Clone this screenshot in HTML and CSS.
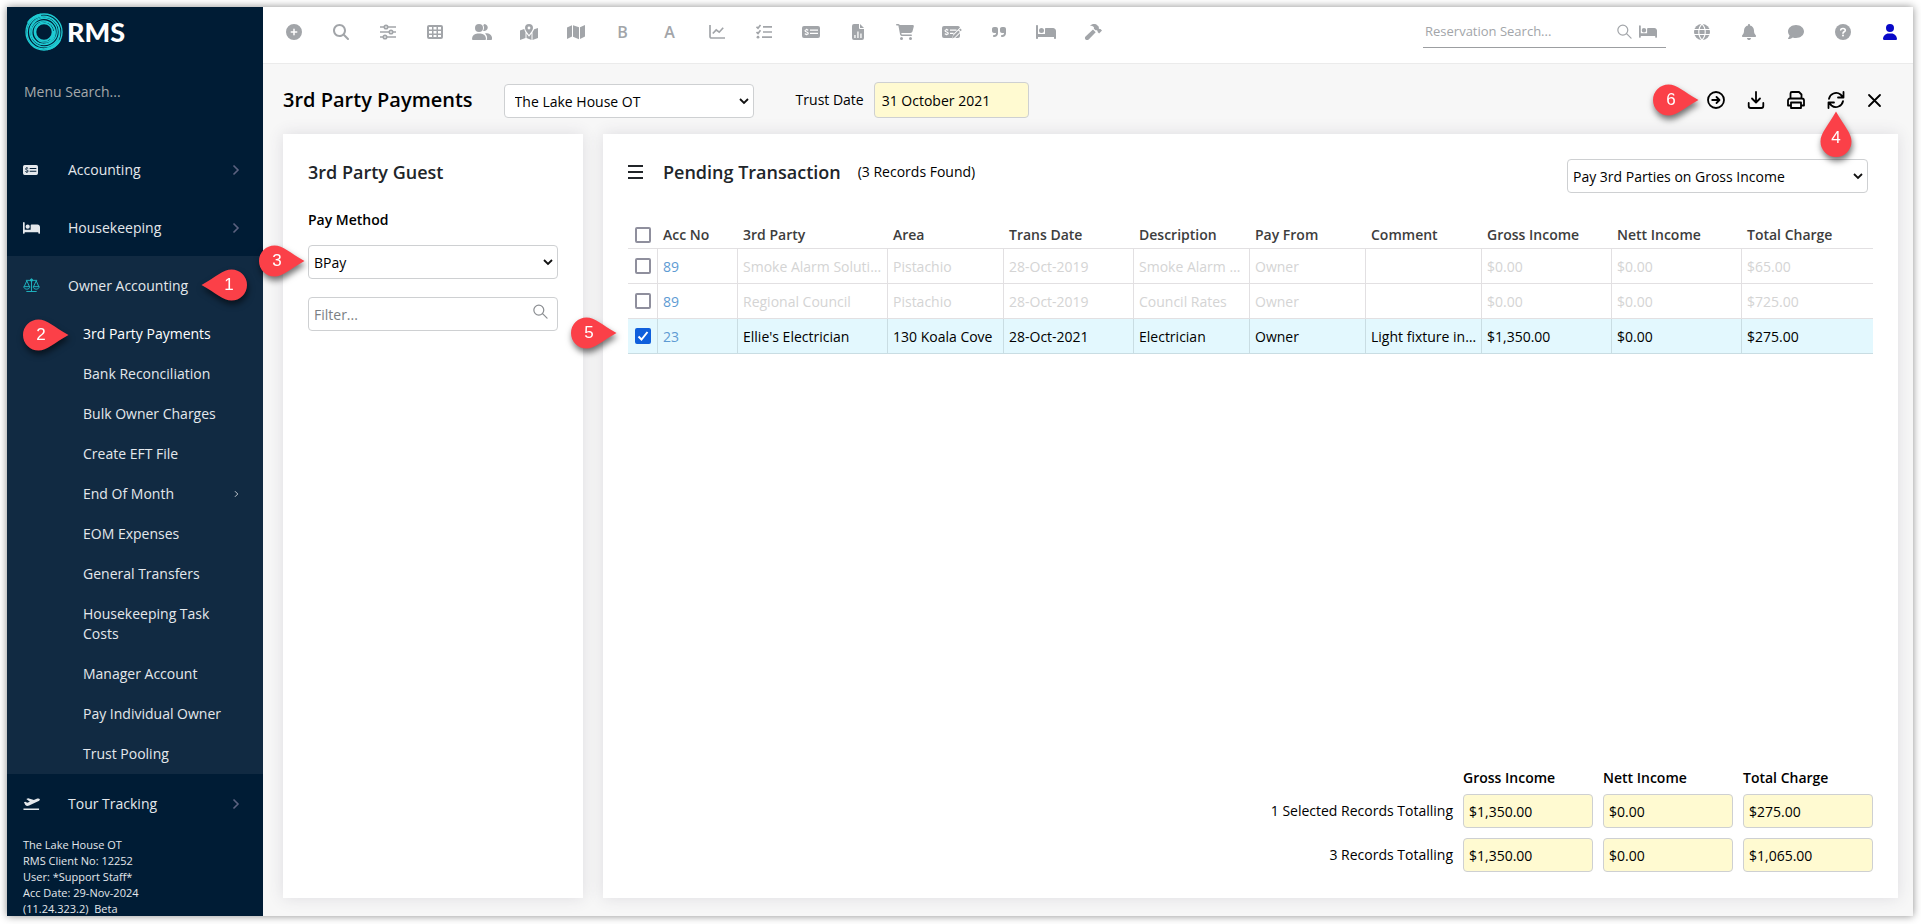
FILE: index.html
```html
<!DOCTYPE html>
<html lang="en">
<head>
<meta charset="UTF-8">
<meta name="viewport" content="width=device-width, initial-scale=1">
<title>3rd Party Payments</title>
<link rel="stylesheet" href="styles.css">
</head>
<body>

<!-- icons that are used more than once -->
<svg class="sprite" aria-hidden="true">
  <symbol id="i-bed" viewBox="0 0 640 512"><path d="M32 32c17.700 0 32 14.300 32 32V320H288V160c0-17.700 14.300-32 32-32H544c53 0 96 43 96 96V448c0 17.700-14.300 32-32 32s-32-14.300-32-32V416H352 320 64v32c0 17.700-14.300 32-32 32s-32-14.300-32-32V64C0 46.300 14.300 32 32 32zm144 96a80 80 0 1 1 0 160 80 80 0 1 1 0-160z"/></symbol>
  <symbol id="i-money" viewBox="0 0 18 14"><path fill-rule="evenodd" d="M2 1h14a2 2 0 0 1 2 2v8a2 2 0 0 1-2 2H2a2 2 0 0 1-2-2V3a2 2 0 0 1 2-2zM8 4.500v1.200h8V4.500zM8 7.800V9h8V7.800z"/><path class="cut" d="M6.200 5.300C5.500 4.400 3 4.400 3 5.800c0 1.500 3.300.9 3.300 2.500 0 1.400-2.700 1.300-3.500.4M4.600 3.700v1M4.600 9.200v1.100"/></symbol>
  <symbol id="i-find" viewBox="0 0 16 16"><path fill="none" stroke="currentColor" stroke-width="1.300" stroke-linecap="round" d="M11.500 6.500a5.300 5.300 0 1 1-10.600 0 5.300 5.300 0 0 1 10.600 0zM10.200 10.200l4.800 4.800"/></symbol>
  <symbol id="i-next" viewBox="0 0 8 12"><path fill="none" stroke="currentColor" stroke-width="1.600" d="M1.500 1.500L6 6l-4.500 4.500"/></symbol>
  <symbol id="i-pin" viewBox="0 0 46 32"><path d="M15.500 .5C24 .5 31 8 45.500 16 31 24 24 31.500 15.500 31.500a15.500 15.500 0 0 1 0-31z"/></symbol>
  <symbol id="i-pin-up" viewBox="0 0 32 46"><path d="M.5 30.500C.5 22 8 15 16 .5 24 15 31.500 22 31.500 30.500a15.500 15.500 0 0 1-31 0z"/></symbol>
</svg>

<div class="app">

  <aside class="sidebar">
    <div class="brand">
      <svg class="brand-mark" viewBox="0 0 38 38" aria-hidden="true">
        <g fill="none" stroke="#1fcbd3" stroke-width="1.300">
          <circle cx="19" cy="19" r="18"/>
          <circle cx="18.500" cy="19.500" r="16.300"/>
          <circle cx="19.500" cy="19" r="14.800"/>
          <circle cx="19" cy="18.500" r="13.200"/>
          <circle cx="18.500" cy="19.500" r="11.700"/>
          <circle cx="19.500" cy="19" r="10.200"/>
          <circle cx="19" cy="19" r="8.600" stroke-width="1.800"/>
          <path stroke-width="2.400" d="M3 10A18 18 0 0 1 16 2M35 27a18 18 0 0 1-13 9M29 18a9 9 0 0 1-4 8"/>
        </g>
      </svg>
      <span class="brand-name">RMS</span>
    </div>
    <input class="menu-search" type="text" placeholder="Menu Search..." aria-label="Menu Search">

    <nav class="menu">
      <a class="menu-item" href="#"><svg class="menu-icon money"><use href="#i-money"/></svg><span>Accounting</span><svg class="next"><use href="#i-next"/></svg></a>
      <a class="menu-item" href="#"><svg class="menu-icon"><use href="#i-bed"/></svg><span>Housekeeping</span><svg class="next"><use href="#i-next"/></svg></a>

      <div class="menu-open">
        <a class="menu-item" href="#">
          <svg class="menu-icon scales" viewBox="0 0 18 16"><path d="M3 2.500h12M9 .8v13.400M3.500 14.400h11M4 3L1.200 9.200M4 3l2.800 6.200M14 3l-2.800 6.200M14 3l2.800 6.200M.8 9.200h6.400c0 3.600-6.400 3.600-6.400 0zM10.800 9.200h6.400c0 3.600-6.400 3.600-6.400 0z"/><circle cx="9" cy="2.300" r="1.300"/></svg>
          <span>Owner Accounting</span>
          <span class="pin pin-left pin-1"><svg><use href="#i-pin"/></svg><b>1</b></span>
        </a>
        <ul class="submenu">
          <li class="current"><a href="#">3rd Party Payments</a><span class="pin pin-2"><svg><use href="#i-pin"/></svg><b>2</b></span></li>
          <li><a href="#">Bank Reconciliation</a></li>
          <li><a href="#">Bulk Owner Charges</a></li>
          <li><a href="#">Create EFT File</a></li>
          <li><a href="#">End Of Month</a><svg class="next small"><use href="#i-next"/></svg></li>
          <li><a href="#">EOM Expenses</a></li>
          <li><a href="#">General Transfers</a></li>
          <li><a href="#">Housekeeping Task Costs</a></li>
          <li><a href="#">Manager Account</a></li>
          <li><a href="#">Pay Individual Owner</a></li>
          <li><a href="#">Trust Pooling</a></li>
        </ul>
      </div>

      <a class="menu-item" href="#">
        <svg class="menu-icon" viewBox="0 0 18 14"><path d="M.5 11.700h16.500v1.600H.5zM1 5.200l1.500-.6 2 1.200 2.800-1.300L3.500 1.700l2-.9 6 2 3-1.300c1.400-.6 3-.4 3.300.4.300.9-.6 1.700-1.800 2.300L6.500 8.600c-1.500.7-3 .5-4-.5z"/></svg>
        <span>Tour Tracking</span><svg class="next"><use href="#i-next"/></svg>
      </a>
    </nav>

    <p class="client">The Lake House OT<br>RMS Client No: 12252<br>User: *Support Staff*<br>Acc Date: 29-Nov-2024<br>(11.24.323.2)&nbsp; Beta</p>
  </aside>

  <div class="content">
    <header class="topbar">
      <div class="tools">
        <button type="button" aria-label="Add"><svg viewBox="0 0 512 512"><path d="M256 512A256 256 0 1 0 256 0a256 256 0 1 0 0 512zM232 344V280H168c-13.300 0-24-10.700-24-24s10.700-24 24-24h64V168c0-13.300 10.700-24 24-24s24 10.700 24 24v64h64c13.300 0 24 10.700 24 24s-10.700 24-24 24H280v64c0 13.300-10.700 24-24 24s-24-10.700-24-24z"/></svg></button>
        <button type="button" aria-label="Search"><svg viewBox="0 0 512 512"><path d="M416 208c0 45.900-14.900 88.300-40 122.700L502.600 457.400c12.500 12.500 12.500 32.800 0 45.300s-32.800 12.500-45.300 0L330.700 376c-34.400 25.200-76.800 40-122.700 40C93.100 416 0 322.900 0 208S93.100 0 208 0S416 93.100 416 208zM208 352a144 144 0 1 0 0-288 144 144 0 1 0 0 288z"/></svg></button>
        <button type="button" aria-label="Settings"><svg viewBox="0 0 16 16"><g class="line"><path d="M0 3h4M8 3h8M0 8h9M13 8h3M0 13h3M7 13h9"/><circle cx="6" cy="3" r="1.700"/><circle cx="11" cy="8" r="1.700"/><circle cx="5" cy="13" r="1.700"/></g></svg></button>
        <button type="button" aria-label="Grid"><svg viewBox="0 0 16 16"><path fill-rule="evenodd" d="M2 1h12a2 2 0 0 1 2 2v10a2 2 0 0 1-2 2H2a2 2 0 0 1-2-2V3a2 2 0 0 1 2-2zM2 3v2.500h3V3zM6.500 3v2.500h3V3zM11 3v2.500h3V3zM2 7v2.500h3V7zM6.500 7v2.500h3V7zM11 7v2.500h3V7zM2 11v2h3v-2zM6.500 11v2h3v-2zM11 11v2h3v-2z"/></svg></button>
        <button type="button" aria-label="Guests"><svg class="wide" viewBox="0 0 20 16"><circle cx="7" cy="4" r="4"/><path d="M5.500 9.500h3A5.500 5.500 0 0 1 14 15a1 1 0 0 1-1 1H1a1 1 0 0 1-1-1 5.500 5.500 0 0 1 5.500-5.500zM12.500 0a3.500 3.500 0 1 1-1.400 6.800 5.500 5.500 0 0 0 .2-5.600A3.500 3.500 0 0 1 12.500 0zM14 9.300h1A5 5 0 0 1 20 15c0 .5-.4 1-1 1h-4.200C15.500 13 15 11 13 9.400z"/></svg></button>
        <button type="button" aria-label="Map locations"><svg class="mid" viewBox="0 0 18 16"><path fill-rule="evenodd" d="M9 0a4 4 0 0 1 4 4c0 2-2.500 5-4 7-1.500-2-4-5-4-7a4 4 0 0 1 4-4zM9 2.600a1.400 1.400 0 1 0 0 2.800 1.400 1.400 0 0 0 0-2.800z"/><path d="M0 6.500L4.200 5c.4 1.500 1 2.700 1.300 3.200V14L0 16zM6.500 9.500L9 12.800l2.500-3.300V16l-5-2zM12.500 8.200l1.700-3L18 4v10l-5.500 2z"/></svg></button>
        <button type="button" aria-label="Map"><svg class="mid" viewBox="0 0 18 16"><path d="M0 3.500L5 1.300v11.200L0 15zM6 1.200l6 2v12l-6-2.500zM13 3.300L18 1v11.500l-5 2.500z"/></svg></button>
        <button type="button" class="letter">B</button>
        <button type="button" class="letter">A</button>
        <button type="button" aria-label="Chart"><svg viewBox="0 0 16 16"><g class="line"><path d="M1 1v11.500A1.500 1.500 0 0 0 2.500 14H16M3.800 9.500l3.400-3.700 3 2.400 4-4.400"/></g></svg></button>
        <button type="button" aria-label="Checklist"><svg viewBox="0 0 16 16"><g class="line"><path d="M7 2.800h9M7 8h9M6 13.200h10M.5 2.800l1.500 1.400L4.500 1M.5 8L2 9.400 4.500 6.200"/></g><circle cx="2" cy="13.200" r="1.400"/></svg></button>
        <button type="button" aria-label="Accounts"><svg class="mid money"><use href="#i-money"/></svg></button>
        <button type="button" aria-label="Reports"><svg viewBox="0 0 16 16"><path fill-rule="evenodd" d="M4 0h5v4a1 1 0 0 0 1 1h4v9a2 2 0 0 1-2 2H4a2 2 0 0 1-2-2V2a2 2 0 0 1 2-2zM4.300 11v3h1.300v-3zM7.300 7.500V14h1.300V7.500zM10.300 9.500V14h1.300V9.500zM10 0l4 4h-4z"/></svg></button>
        <button type="button" aria-label="Sales"><svg class="mid" viewBox="0 0 576 512"><path d="M0 24C0 10.700 10.700 0 24 0H69.500c22 0 41.500 12.800 50.600 32h411c26.300 0 45.500 25 38.600 50.400l-41 152.300c-8.500 31.400-37 53.300-69.500 53.300H170.700l5.400 28.500c2.200 11.300 12.100 19.500 23.600 19.500H488c13.300 0 24 10.700 24 24s-10.700 24-24 24H199.700c-34.600 0-64.300-24.600-70.700-58.500L77.400 54.500c-.7-3.800-4-6.500-7.900-6.500H24C10.700 48 0 37.300 0 24zM128 464a48 48 0 1 1 96 0 48 48 0 1 1 -96 0zm336-48a48 48 0 1 1 0 96 48 48 0 1 1 0-96z"/></svg></button>
        <button type="button" aria-label="Edit charges"><svg class="wide money" viewBox="0 0 20 16"><path fill-rule="evenodd" d="M2 2h14a2 2 0 0 1 2 1.500L11.500 10 10 14H2a2 2 0 0 1-2-2V4a2 2 0 0 1 2-2zM8 5.500v1.200h6.500V5.500zM8 8.800V10h3.500V8.800z"/><path d="M18.300 4.500l1.500 1.500-1.200 1.200-1.500-1.500zM16.300 6.500L17.900 8l-5.400 5.500-2.300.9.700-2.400zM15 12.200l3-3V12a2 2 0 0 1-2 2h-2.800z"/><path class="cut" d="M6.200 6.300C5.500 5.400 3 5.400 3 6.800c0 1.500 3.300.9 3.300 2.500 0 1.400-2.700 1.300-3.500.4M4.600 4.700v1M4.600 10.200v1.100"/></svg></button>
        <button type="button" aria-label="Quotes"><svg class="slim" viewBox="0 0 448 512"><path d="M448 296c0 66.300-53.700 120-120 120h-8c-17.700 0-32-14.300-32-32s14.300-32 32-32h8c30.900 0 56-25.100 56-56v-8H320c-35.300 0-64-28.700-64-64V160c0-35.300 28.700-64 64-64h64c35.300 0 64 28.700 64 64v136zm-256 0c0 66.300-53.700 120-120 120H64c-17.700 0-32-14.300-32-32s14.300-32 32-32h8c30.900 0 56-25.100 56-56v-8H64c-35.300 0-64-28.700-64-64V160c0-35.300 28.700-64 64-64h64c35.300 0 64 28.700 64 64v136z"/></svg></button>
        <button type="button" aria-label="Housekeeping"><svg class="wide"><use href="#i-bed"/></svg></button>
        <button type="button" aria-label="Maintenance"><svg class="mid" viewBox="0 0 18 16"><path d="M6 1.800C8-.3 11.500-.5 13.500 1.400l1.300 1.400v1.600l.7.700h1l1.500 1.500-2.900 2.900-1.500-1.500v-1l-.8-.8h-1.300L9.900 4.700V3.200C9 2.300 7.500 1.800 6 1.800zM9 5.500l2.700 2.700-7 7.300c-1 .9-2.300.8-3.200 0-.8-.8-.8-2.200 0-3z"/></svg></button>
      </div>

      <div class="booking-search">
        <input type="text" placeholder="Reservation Search..." aria-label="Reservation Search">
        <svg class="find"><use href="#i-find"/></svg>
        <svg class="bed"><use href="#i-bed"/></svg>
      </div>

      <div class="tools">
        <button type="button" aria-label="Language"><svg viewBox="0 0 16 16"><circle cx="8" cy="8" r="8"/><path class="cut" d="M0 5.500h16M0 10.500h16M8 0C3.700 4 3.700 12 8 16M8 0c4.300 4 4.300 12 0 16"/></svg></button>
        <button type="button" aria-label="Alerts"><svg class="slim" viewBox="0 0 448 512"><path d="M224 0c-17.700 0-32 14.300-32 32V51.200C119 66 64 130.600 64 208v18.800c0 47-17.300 92.400-48.500 127.600l-7.400 8.300c-8.400 9.400-10.400 22.900-5.300 34.400S19.400 416 32 416H416c12.600 0 24-7.400 29.200-18.900s3.100-25-5.300-34.400l-7.400-8.300C401.300 319.200 384 273.900 384 226.800V208c0-77.400-55-142-128-156.800V32c0-17.700-14.300-32-32-32zm45.300 493.300c12-12 18.700-28.300 18.700-45.300H224 160c0 17 6.700 33.300 18.700 45.300s28.300 18.700 45.300 18.700s33.300-6.700 45.300-18.700z"/></svg></button>
        <button type="button" aria-label="Messages"><svg viewBox="0 0 512 512"><path d="M512 240c0 114.900-114.600 208-256 208c-37.100 0-72.300-6.400-104.100-17.900c-11.900 8.700-31.300 20.600-54.300 30.600C73.600 471.100 44.700 480 16 480c-6.500 0-12.300-3.900-14.800-9.900c-2.500-6-1.100-12.800 3.400-17.400C20 436 44 400 47.400 361C17.700 326.800 0 285.100 0 240C0 125.100 114.600 32 256 32s256 93.100 256 208z"/></svg></button>
        <button type="button" aria-label="Help"><svg viewBox="0 0 16 16"><circle cx="8" cy="8" r="8"/><path fill="none" stroke="#fff" stroke-width="1.600" stroke-linecap="round" d="M5.700 5.900C5.900 3.900 10.300 3.900 10.300 6.200c0 1.500-2.300 1.600-2.300 3"/><circle cx="8" cy="11.600" r="1" fill="#fff"/></svg></button>
        <button type="button" class="user" aria-label="User"><svg class="slim" viewBox="0 0 448 512"><path d="M224 256A128 128 0 1 0 224 0a128 128 0 1 0 0 256zm-45.700 48C79.800 304 0 383.800 0 482.300C0 498.700 13.300 512 29.700 512H418.300c16.400 0 29.700-13.300 29.700-29.700C448 383.800 368.200 304 269.700 304H178.300z"/></svg></button>
      </div>
    </header>

    <div class="page-head">
      <h1>3rd Party Payments</h1>
      <select class="field property" aria-label="Property"><option>The Lake House OT</option></select>
      <label for="trust-date">Trust Date</label>
      <input class="field yellow trust-date" id="trust-date" type="text" value="31 October 2021">

      <div class="actions">
        <button type="button" aria-label="Process">
          <svg viewBox="0 0 18 18"><circle cx="9" cy="9" r="8"/><path d="M5.200 9h7.200M9.500 6l3 3-3 3"/></svg>
          <span class="pin pin-6"><svg><use href="#i-pin"/></svg><b>6</b></span>
        </button>
        <button type="button" aria-label="Download"><svg viewBox="0 0 18 18"><path d="M9 1v10M5 7.500l4 4 4-4M1.700 12v3A2 2 0 0 0 3.700 17h10.600a2 2 0 0 0 2-2v-3"/></svg></button>
        <button type="button" aria-label="Print"><svg viewBox="0 0 18 18"><path d="M3.500 7V2.500A1.500 1.500 0 0 1 5 1h7l2.500 2.500V7M4 14.500H1V9.500A2 2 0 0 1 3 7.500h12a2 2 0 0 1 2 2v5h-3M4 11.500h10V17H4z"/></svg></button>
        <button type="button" aria-label="Refresh">
          <svg viewBox="0 0 18 18"><path d="M2 7.800C3 3 9-.2 13.500 3.500L16 6M16.500 1v5.500H11M16 10.200c-1 4.800-7 8-11.500 4.300L2 12M1.500 17v-5.500H7"/></svg>
          <span class="pin pin-up pin-4"><svg><use href="#i-pin-up"/></svg><b>4</b></span>
        </button>
        <button type="button" aria-label="Close"><svg viewBox="0 0 18 18"><path d="M2 4l11 11M13 4L2 15"/></svg></button>
      </div>
    </div>

    <main class="panels">
      <section class="card guest">
        <h2>3rd Party Guest</h2>
        <label class="strong" for="pay-method">Pay Method</label>
        <div class="with-pin">
          <select class="field" id="pay-method"><option>BPay</option></select>
          <span class="pin pin-3"><svg><use href="#i-pin"/></svg><b>3</b></span>
        </div>
        <div class="filter">
          <input class="field" type="text" placeholder="Filter..." aria-label="Filter">
          <svg><use href="#i-find"/></svg>
        </div>
      </section>

      <section class="card pending">
        <div class="pending-head">
          <button type="button" class="burger" aria-label="Options"><svg viewBox="0 0 15 14"><path d="M0 1h15M0 7h15M0 13h15"/></svg></button>
          <h2>Pending Transaction</h2>
          <span class="count">(3 Records Found)</span>
          <select class="field basis" aria-label="Payment basis"><option>Pay 3rd Parties on Gross Income</option></select>
        </div>

        <table class="grid">
          <colgroup>
            <col class="w30"><col class="w80"><col class="w150"><col class="w116"><col class="w130"><col class="w116"><col class="w116"><col class="w116"><col class="w130"><col class="w130"><col>
          </colgroup>
          <thead>
            <tr>
              <th><input type="checkbox" aria-label="Select all"></th>
              <th>Acc No</th><th>3rd Party</th><th>Area</th><th>Trans Date</th><th>Description</th><th>Pay From</th><th>Comment</th><th>Gross Income</th><th>Nett Income</th><th>Total Charge</th>
            </tr>
          </thead>
          <tbody>
            <tr>
              <td><input type="checkbox" aria-label="Select Smoke Alarm Solutions"></td>
              <td><a href="#">89</a></td><td>Smoke Alarm Solutions</td><td>Pistachio</td><td>28-Oct-2019</td><td>Smoke Alarm Check</td><td>Owner</td><td></td><td>$0.00</td><td>$0.00</td><td>$65.00</td>
            </tr>
            <tr>
              <td><input type="checkbox" aria-label="Select Regional Council"></td>
              <td><a href="#">89</a></td><td>Regional Council</td><td>Pistachio</td><td>28-Oct-2019</td><td>Council Rates</td><td>Owner</td><td></td><td>$0.00</td><td>$0.00</td><td>$725.00</td>
            </tr>
            <tr class="picked">
              <td class="pin-cell"><input type="checkbox" checked aria-label="Select Ellie's Electrician"><span class="pin pin-5"><svg><use href="#i-pin"/></svg><b>5</b></span></td>
              <td><a href="#">23</a></td><td>Ellie's Electrician</td><td>130 Koala Cove</td><td>28-Oct-2021</td><td>Electrician</td><td>Owner</td><td>Light fixture install</td><td>$1,350.00</td><td>$0.00</td><td>$275.00</td>
            </tr>
          </tbody>
        </table>

        <div class="totals">
          <span></span>
          <span class="strong">Gross Income</span>
          <span class="strong">Nett Income</span>
          <span class="strong">Total Charge</span>

          <label for="sel-gross">1 Selected Records Totalling</label>
          <input class="field yellow" id="sel-gross" type="text" value="$1,350.00" readonly>
          <input class="field yellow" type="text" value="$0.00" aria-label="Selected nett income" readonly>
          <input class="field yellow" type="text" value="$275.00" aria-label="Selected total charge" readonly>

          <label for="all-gross">3 Records Totalling</label>
          <input class="field yellow" id="all-gross" type="text" value="$1,350.00" readonly>
          <input class="field yellow" type="text" value="$0.00" aria-label="All nett income" readonly>
          <input class="field yellow" type="text" value="$1,065.00" aria-label="All total charge" readonly>
        </div>
      </section>
    </main>
  </div>
</div>

</body>
</html>
```
FILE: styles.css
```css
* {
  box-sizing: border-box;
}

body {
  margin: 0;
  padding: 7px 8px 8px 7px;
  height: 100vh;
  background: #fff;
  color: #000;
  font-family: "Open Sans", "Noto Sans", sans-serif;
  font-size: 14px;
  line-height: 20px;
}

input,
select,
button {
  font: inherit;
  color: inherit;
}

button {
  padding: 0;
  border: 0;
  background: none;
  cursor: pointer;
}

a {
  color: inherit;
  text-decoration: none;
}

svg {
  display: block;
  flex: none;
  fill: currentColor;
}

.sprite {
  position: absolute;
  width: 0;
  height: 0;
}

.app {
  --cut: #fff;
  display: flex;
  height: 100%;
  overflow: clip;
  overflow-clip-margin: 8px;
  background: #f7f7f7;
  box-shadow: 0 0 8px rgba(0, 0, 0, 0.45);
}

/* sidebar */
.sidebar {
  --cut: #001c35;
  flex: none;
  width: 256px;
  overflow: clip;
  background: #001c35;
  color: #e4e8ec;
}

.brand {
  display: flex;
  align-items: center;
  gap: 4px;
  padding: 6px 18px 0;
}

.brand-mark {
  width: 38px;
  height: 38px;
}

.brand-name {
  color: #fff;
  font-family: Lato, sans-serif;
  font-size: 27px;
  font-weight: 900;
  line-height: 38px;
}

.menu-search {
  display: block;
  width: 100%;
  height: 36px;
  margin: 22px 0 31px;
  padding: 0 17px;
  border: 0;
  background: none;
}

.menu-search::placeholder {
  color: #a5a8aa;
  opacity: 1;
}

.menu-item {
  position: relative;
  display: flex;
  align-items: center;
  height: 58px;
  padding: 1px 23px 0 16px;
}

.menu-icon {
  width: 17px;
  height: 14px;
  margin-right: 28px;
}

.menu-icon.money {
  width: 15px;
  height: 12px;
  margin-right: 30px;
}

.menu-icon.scales {
  height: 15px;
  fill: none;
  stroke: #1fb9c4;
}

.next {
  width: 8px;
  height: 12px;
  margin-left: auto;
  color: #5c6280;
}

.next.small {
  width: 5px;
  height: 8px;
  color: #c3c9cf;
}

.menu-open {
  background: #112a42;
}

.submenu {
  margin: 0;
  padding: 0;
  list-style: none;
}

.submenu li {
  position: relative;
  display: flex;
  align-items: center;
  padding: 10px 24px 10px 76px;
}

.submenu .current {
  color: #fff;
}

.client {
  margin: 0;
  padding: 5px 16px;
  font-size: 11px;
  line-height: 16px;
  white-space: nowrap;
}

/* top bar */
.content {
  display: flex;
  flex: 1;
  flex-direction: column;
  min-width: 0;
}

.topbar {
  display: flex;
  height: 57px;
  padding-left: 7px;
  border-bottom: 1px solid #ebebeb;
  background: #fff;
  color: #a2a5a9;
}

.tools {
  display: flex;
  height: 50px;
}

.tools button {
  display: flex;
  align-items: center;
  justify-content: center;
  width: 47px;
}

.tools svg {
  width: 16px;
  height: 16px;
}

.tools .slim {
  width: 14px;
}

.tools .mid {
  width: 18px;
}

.tools .wide {
  width: 20px;
}

.tools .letter {
  font-size: 16px;
  font-weight: 600;
}

.tools .user {
  color: #0808c8;
}

.line {
  fill: none;
  stroke: currentColor;
  stroke-width: 1.7;
}

.cut {
  fill: none;
  stroke: var(--cut);
  stroke-width: 1.1;
}

.booking-search {
  display: flex;
  align-items: center;
  gap: 7px;
  width: 243px;
  height: 31px;
  margin: 10px 12px 0 auto;
  padding: 0 9px 2px 2px;
  border-bottom: 1px solid #9c9ea1;
}

.booking-search input {
  flex: 1;
  min-width: 0;
  padding: 0;
  border: 0;
  background: none;
  font-size: 13px;
}

.booking-search input::placeholder {
  color: #a2a5a9;
  opacity: 1;
}

.booking-search .find {
  width: 15px;
  height: 15px;
}

.booking-search .bed {
  width: 18px;
  height: 15px;
}

/* title row */
.page-head {
  display: flex;
  align-items: center;
  padding: 18px 17px 16px 20px;
}

h1,
h2 {
  margin: 0;
  font-weight: 600;
}

h1 {
  font-size: 20px;
  line-height: 28px;
}

h2 {
  color: #212529;
  font-size: 18px;
  line-height: 26px;
}

.field {
  width: 100%;
  height: 34px;
  padding: 0 5px;
  border: 1px solid #ced0d2;
  border-radius: 4px;
  background-color: #fff;
}

select.field {
  padding-top: 1px;
  appearance: none;
  background-image: url("data:image/svg+xml,%3Csvg xmlns='http://www.w3.org/2000/svg' width='10' height='7'%3E%3Cpath d='M1 1l4 4 4-4' fill='none' stroke='%23111' stroke-width='1.800'/%3E%3C/svg%3E");
  background-repeat: no-repeat;
  background-position: right 4px center;
}

.field::placeholder {
  color: #7b7f84;
  opacity: 1;
}

.yellow {
  background-color: #fffad1;
}

select.property {
  width: 250px;
  margin: 2px 42px 0 31px;
  padding-left: 10px;
}

.trust-date {
  width: 155px;
  height: 36px;
  margin-left: 10px;
  padding-left: 7px;
}

.actions {
  display: flex;
  margin-left: auto;
}

.actions button {
  position: relative;
  display: flex;
  justify-content: center;
  width: 40px;
}

.actions button > svg {
  width: 18px;
  height: 18px;
  fill: none;
  stroke: currentColor;
  stroke-width: 1.8;
  stroke-linecap: round;
  stroke-linejoin: round;
}

/* panels */
.panels {
  display: flex;
  flex: 1;
  gap: 20px;
  min-height: 0;
  padding: 0 15px 18px 20px;
}

.card {
  padding: 25px 25px 26px;
  background: #fff;
  box-shadow: 0 0 15px rgba(69, 65, 90, 0.14);
}

.guest {
  flex: none;
  width: 300px;
}

.strong {
  font-weight: 600;
}

.guest .strong {
  display: block;
  margin: 25px 0 15px;
}

.with-pin {
  position: relative;
}

.filter {
  position: relative;
  margin-top: 18px;
}

.filter svg {
  position: absolute;
  top: 7px;
  right: 10px;
  width: 15px;
  height: 15px;
  color: #8b8e92;
}

.pending {
  display: flex;
  flex: 1;
  flex-direction: column;
  min-width: 0;
}

.pending-head {
  display: flex;
  align-items: center;
  height: 34px;
}

.burger {
  width: 15px;
  margin-right: 20px;
}

.burger svg {
  height: 14px;
  stroke: #212529;
  stroke-width: 2;
}

.count {
  margin-left: 17px;
}

.pending-head h2,
.count,
.burger {
  margin-bottom: 8px;
}

.basis {
  width: 301px;
  margin: 0 5px 0 auto;
}

.grid {
  width: 100%;
  margin-top: 29px;
  border-spacing: 0;
  table-layout: fixed;
}

.w30 { width: 30px; }
.w80 { width: 80px; }
.w116 { width: 116px; }
.w130 { width: 130px; }
.w150 { width: 150px; }

.grid th,
.grid td {
  height: 35px;
  padding: 1px 3px 0 5px;
  border-bottom: 1px solid #e2e0e2;
  overflow: hidden;
  text-align: left;
  text-overflow: ellipsis;
  white-space: nowrap;
}

.grid th {
  height: 27px;
  padding: 0 5px;
  color: #3d3d3d;
  font-weight: 600;
}

.grid td {
  border-right: 1px solid #e2e0e2;
  color: #d4d4d4;
}

.grid td:last-child {
  border-right: 0;
}

.grid th:first-child,
.grid td:first-child {
  padding: 0 6px 0 7px;
}

.grid a {
  color: #5e9bd3;
}

.grid .picked td {
  border-color: #c9dde3;
  background: #e3f8fe;
  color: #000;
}

.grid .pin-cell {
  position: relative;
  overflow: visible;
}

input[type="checkbox"] {
  appearance: none;
  display: block;
  width: 16px;
  height: 16px;
  margin: 0;
  border: 2px solid #8f8f9d;
  border-radius: 2px;
  background: #fff;
}

input[type="checkbox"]:checked {
  border-color: #0f5fdc;
  background: #0f5fdc url("data:image/svg+xml,%3Csvg xmlns='http://www.w3.org/2000/svg' width='12' height='12'%3E%3Cpath d='M1.500 6.500l3 3 6-7.500' fill='none' stroke='%23fff' stroke-width='2'/%3E%3C/svg%3E") center no-repeat;
}

.totals {
  display: grid;
  grid-template-columns: 1fr repeat(3, 130px);
  gap: 10px;
  align-items: center;
  margin-top: auto;
}

.totals .strong {
  margin-bottom: -4px;
}

.totals label {
  text-align: right;
}

/* numbered markers */
.pin {
  position: absolute;
  z-index: 2;
  width: 46px;
  height: 32px;
  filter: drop-shadow(1px 4px 3px rgba(0, 0, 0, 0.55));
}

.pin svg {
  width: 100%;
  height: 100%;
  color: #fb4048;
}

.pin b {
  position: absolute;
  inset: 0 10px 0 0;
  color: #fff;
  font-family: "Liberation Sans", sans-serif;
  font-size: 17px;
  font-weight: 400;
  line-height: 32px;
  text-align: center;
}

.pin-left svg {
  transform: scaleX(-1);
}

.pin-left b {
  inset: 0 0 0 10px;
}

.pin-up {
  width: 32px;
  height: 46px;
}

.pin-up b {
  inset: 11px 0 0;
}

.pin-1 { top: 13px; left: 194px; }
.pin-2 { top: 5px; left: 16px; }
.pin-3 { top: 0; left: -49px; }
.pin-4 { top: 20px; left: 4px; }
.pin-5 { top: -2px; left: -57px; }
.pin-6 { top: -7px; left: -43px; }
```
